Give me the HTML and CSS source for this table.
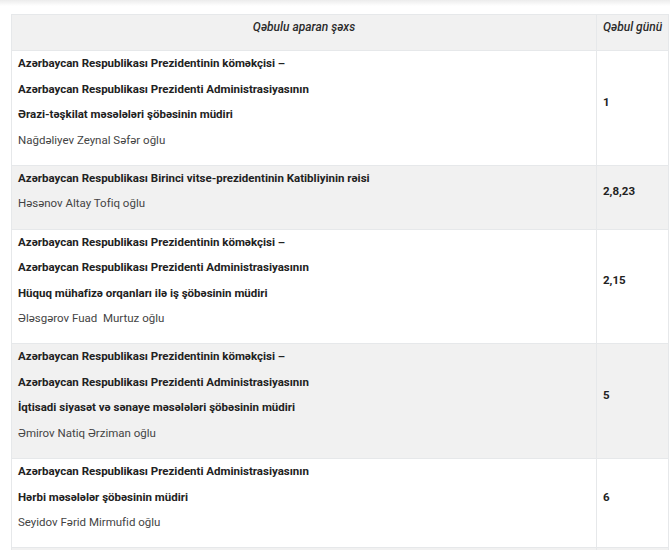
FILE: index.html
```html
<!DOCTYPE html>
<html lang="az">
<head>
<meta charset="utf-8">
<title>Qəbul</title>
<link rel="stylesheet" href="styles.css">
</head>
<body>
<div class="topshade"></div>
<div class="wrap">
<table class="reception">
  <colgroup>
    <col class="col-person">
    <col class="col-day">
  </colgroup>
  <thead>
    <tr>
      <th class="c-person"><p>Qəbulu aparan şəxs</p></th>
      <th class="c-day"><p>Qəbul günü</p></th>
    </tr>
  </thead>
  <tbody>
    <tr>
      <td class="c-person">
        <p class="pos">Azərbaycan Respublikası Prezidentinin köməkçisi –</p>
        <p class="pos">Azərbaycan Respublikası Prezidenti Administrasiyasının</p>
        <p class="pos">Ərazi-təşkilat məsələləri şöbəsinin müdiri</p>
        <p class="name">Nağdəliyev Zeynal Səfər oğlu</p>
      </td>
      <td class="c-day"><p>1</p></td>
    </tr>
    <tr class="alt">
      <td class="c-person">
        <p class="pos">Azərbaycan Respublikası Birinci vitse-prezidentinin Katibliyinin rəisi</p>
        <p class="name">Həsənov Altay Tofiq oğlu</p>
      </td>
      <td class="c-day"><p>2,8,23</p></td>
    </tr>
    <tr>
      <td class="c-person">
        <p class="pos">Azərbaycan Respublikası Prezidentinin köməkçisi –</p>
        <p class="pos">Azərbaycan Respublikası Prezidenti Administrasiyasının</p>
        <p class="pos">Hüquq mühafizə orqanları ilə iş şöbəsinin müdiri</p>
        <p class="name">Ələsgərov Fuad&nbsp; Murtuz oğlu</p>
      </td>
      <td class="c-day"><p>2,15</p></td>
    </tr>
    <tr class="alt">
      <td class="c-person">
        <p class="pos">Azərbaycan Respublikası Prezidentinin köməkçisi –</p>
        <p class="pos">Azərbaycan Respublikası Prezidenti Administrasiyasının</p>
        <p class="pos">İqtisadi siyasət və sənaye məsələləri şöbəsinin müdiri</p>
        <p class="name">Əmirov Natiq Ərziman oğlu</p>
      </td>
      <td class="c-day"><p>5</p></td>
    </tr>
    <tr>
      <td class="c-person">
        <p class="pos">Azərbaycan Respublikası Prezidenti Administrasiyasının</p>
        <p class="pos">Hərbi məsələlər şöbəsinin müdiri</p>
        <p class="name">Seyidov Fərid Mirmufid oğlu</p>
      </td>
      <td class="c-day"><p>6</p></td>
    </tr>
    <tr class="alt">
      <td class="c-person">
        <p class="pos">Azərbaycan Respublikası Prezidentinin köməkçisi –</p>
        <p class="pos">Azərbaycan Respublikası Prezidenti Administrasiyasının</p>
        <p class="pos">Humanitar siyasət məsələləri şöbəsinin müdiri</p>
        <p class="name">Əliyev Fərid Əli oğlu</p>
      </td>
      <td class="c-day"><p>7</p></td>
    </tr>
  </tbody>
</table>
</div>
</body>
</html>
```

FILE: styles.css
```css
html, body {
  margin: 0;
  padding: 0;
  background: #ffffff;
}
body {
  font-family: Roboto, "Liberation Sans", Arial, sans-serif;
  font-size: 11.5px;
  color: #333333;
  overflow: hidden;
}
.topshade {
  height: 6px;
  background: linear-gradient(#ececec, #ffffff);
}
.wrap {
  padding: 8px 1px 0 11px;
}
.reception {
  width: 658px;
  border-collapse: collapse;
  table-layout: fixed;
}
.col-day {
  width: 72px;
}
.reception th,
.reception td {
  border: 1px solid #e6e8ea;
  vertical-align: middle;
  text-align: left;
}
.reception th {
  background: #f1f1f1;
  font-size: 12px;
  font-weight: 500;
  font-style: italic;
  color: #2b2b2b;
  padding: 5px 6px 5px;
  white-space: nowrap;
}
.reception th.c-person {
  text-align: center;
}
.reception th.c-day {
  padding-right: 2px;
}
.reception td {
  padding: 5px 6px 7px;
}
.reception th p,
.reception td p {
  margin: 0 0 10px;
  line-height: 15.4px;
}
.reception tr.alt td {
  background: #f1f1f1;
}
.pos {
  font-weight: 700;
  color: #222222;
}
.name {
  color: #444444;
}
td.c-day p {
  font-weight: 700;
  color: #222222;
}
```
